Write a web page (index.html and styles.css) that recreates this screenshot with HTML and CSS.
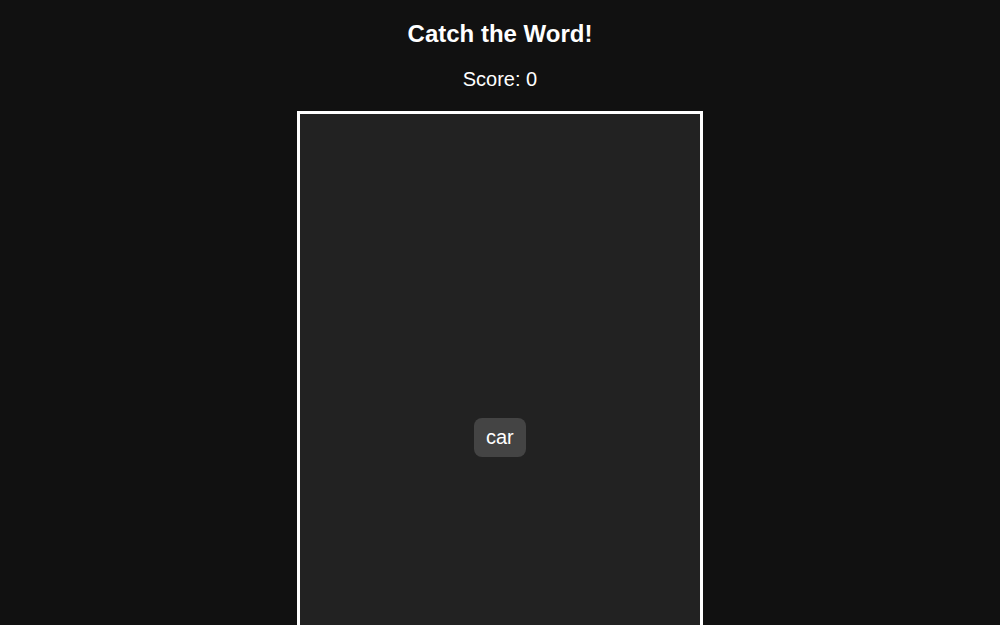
FILE: index.html
```html
<!DOCTYPE html>
<html lang="en">
<head>
<meta charset="utf-8">
<title>Catch the Word!</title>
<link rel="stylesheet" href="styles.css">
</head>
<body>
  <h1 class="title">Catch the Word!</h1>
  <p class="score">Score: <span id="score">0</span></p>
  <div class="game">
    <div class="word" style="left: 174px; top: 304px;">car</div>
  </div>
</body>
</html>
```
FILE: styles.css
```css
html, body {
  margin: 0;
  padding: 0;
}
body {
  background: #111111;
  color: #ffffff;
  font-family: "Liberation Sans", Arial, Helvetica, sans-serif;
  display: flex;
  flex-direction: column;
  align-items: center;
}
.title {
  font-size: 24px;
  font-weight: bold;
  line-height: 28px;
  margin: 20px 0 0;
}
.score {
  font-size: 20px;
  line-height: 23px;
  margin: 20px 0 0;
}
.game {
  position: relative;
  margin-top: 20px;
  width: 400px;
  height: 600px;
  background: #222222;
  border: 3px solid #ffffff;
  overflow: hidden;
  flex-shrink: 0;
}
.word {
  position: absolute;
  background: #444444;
  color: #ffffff;
  font-size: 20px;
  line-height: 23px;
  padding: 8px 12px;
  border-radius: 8px;
  white-space: nowrap;
}
```
